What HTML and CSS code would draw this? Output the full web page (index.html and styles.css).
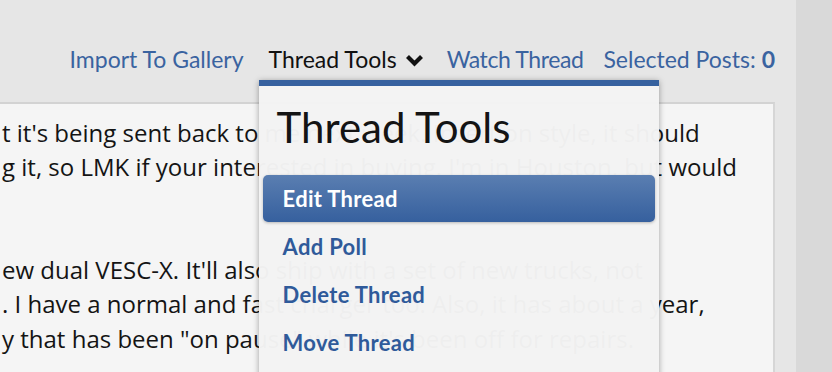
FILE: index.html
```html
<!DOCTYPE html>
<html>
<head>
<meta charset="utf-8">
<link rel="stylesheet" href="styles.css">
</head>
<body>
<div class="page">
  <div class="main">
    <nav class="tools">
      <a class="tool-link" href="#">Import To Gallery</a>
      <div class="trigger">
        <span class="trigger-label">Thread Tools</span>
        <svg class="chev" width="19" height="14" viewBox="0 0 19 14"><polyline points="2.5,3.5 9.5,10.5 16.5,3.5" fill="none" stroke="#111" stroke-width="4.2" stroke-linecap="butt" stroke-linejoin="miter"/></svg>
        <div class="menu">
          <h3 class="menu-title">Thread Tools</h3>
          <ul class="menu-list">
            <li class="menu-item active">Edit Thread</li>
            <li class="menu-item">Add Poll</li>
            <li class="menu-item">Delete Thread</li>
            <li class="menu-item">Move Thread</li>
          </ul>
        </div>
      </div>
      <a class="tool-link watch" href="#">Watch Thread</a>
      <a class="tool-link" href="#">Selected Posts: <b>0</b></a>
    </nav>
    <div class="post">
      <div class="line">t it's being sent back to me next week. Insertion style, it should</div>
      <div class="line">g it, so LMK if your interested in buying. I'm in Houston, but would</div>
      <div class="line">&nbsp;</div>
      <div class="line">&nbsp;</div>
      <div class="line">ew dual VESC-X. It'll also ship with a set of new trucks, not</div>
      <div class="line">. I have a normal and fast charger too. Also, it has about a year,</div>
      <div class="line">y that has been "on pause" while it's been off for repairs.</div>
    </div>
  </div>
  <div class="rail"></div>
</div>
</body>
</html>
```
FILE: styles.css
```css
html, body {
  margin: 0;
  height: 372px;
  overflow: hidden;
}
body {
  font-family: "Open Sans", sans-serif;
  background: #d9d9d9;
}
.page {
  display: flex;
  height: 372px;
}
.main {
  width: 796px;
  background: #e6e6e6;
  display: flex;
  flex-direction: column;
}
.rail {
  flex: 1;
  background: #d9d9d9;
}
.tools {
  display: flex;
  justify-content: flex-end;
  align-items: center;
  gap: 20px;
  padding: 44px 21px 28px 0;
  font-family: Lato, sans-serif;
  font-size: 23px;
  line-height: 30px;
}
.tool-link {
  color: #3a63a0;
  text-decoration: none;
}
.tool-link.watch {
  letter-spacing: -0.4px;
}
.tool-link b {
  font-weight: 700;
}
.trigger {
  position: relative;
  display: flex;
  align-items: center;
  gap: 8px;
  margin: 0 3px 0 5px;
  color: #111;
}
.chev {
  display: block;
  margin-top: 2px;
}
.menu {
  position: absolute;
  left: -10px;
  top: calc(100% + 6px);
  width: 400px;
  height: 300px;
  box-sizing: border-box;
  padding: 0 4px;
  background: rgba(243, 243, 243, 0.98);
  border-top: 6px solid #36619f;
  box-shadow: 0 1px 6px rgba(0, 0, 0, 0.35);
  z-index: 2;
}
.menu-title {
  margin: 17px 0 24px 14px;
  font-size: 42px;
  line-height: 48px;
  font-weight: 400;
  color: #141414;
}
.menu-list {
  list-style: none;
  margin: 0;
  padding: 0;
}
.menu-item {
  height: 48px;
  line-height: 48px;
  padding-left: 20px;
  font-size: 22px;
  letter-spacing: 0.3px;
  font-weight: 700;
  color: #2f5a9a;
}
.menu-item.active {
  height: 47px;
  line-height: 47px;
  margin-bottom: 1px;
  color: #fff;
  border-radius: 5px;
  background: linear-gradient(#5a7eb1, #36609e);
  box-shadow: 0 1px 3px rgba(0, 0, 0, 0.25);
}
.post {
  flex: 1;
  margin-right: 21px;
  padding: 12px 0 0 2px;
  background: #f5f5f5;
  border-top: 2px solid #d3d3d3;
  border-right: 2px solid #d6d6d6;
  font-size: 24px;
  line-height: 34.3px;
  color: #141414;
  white-space: nowrap;
  overflow: hidden;
}
```
